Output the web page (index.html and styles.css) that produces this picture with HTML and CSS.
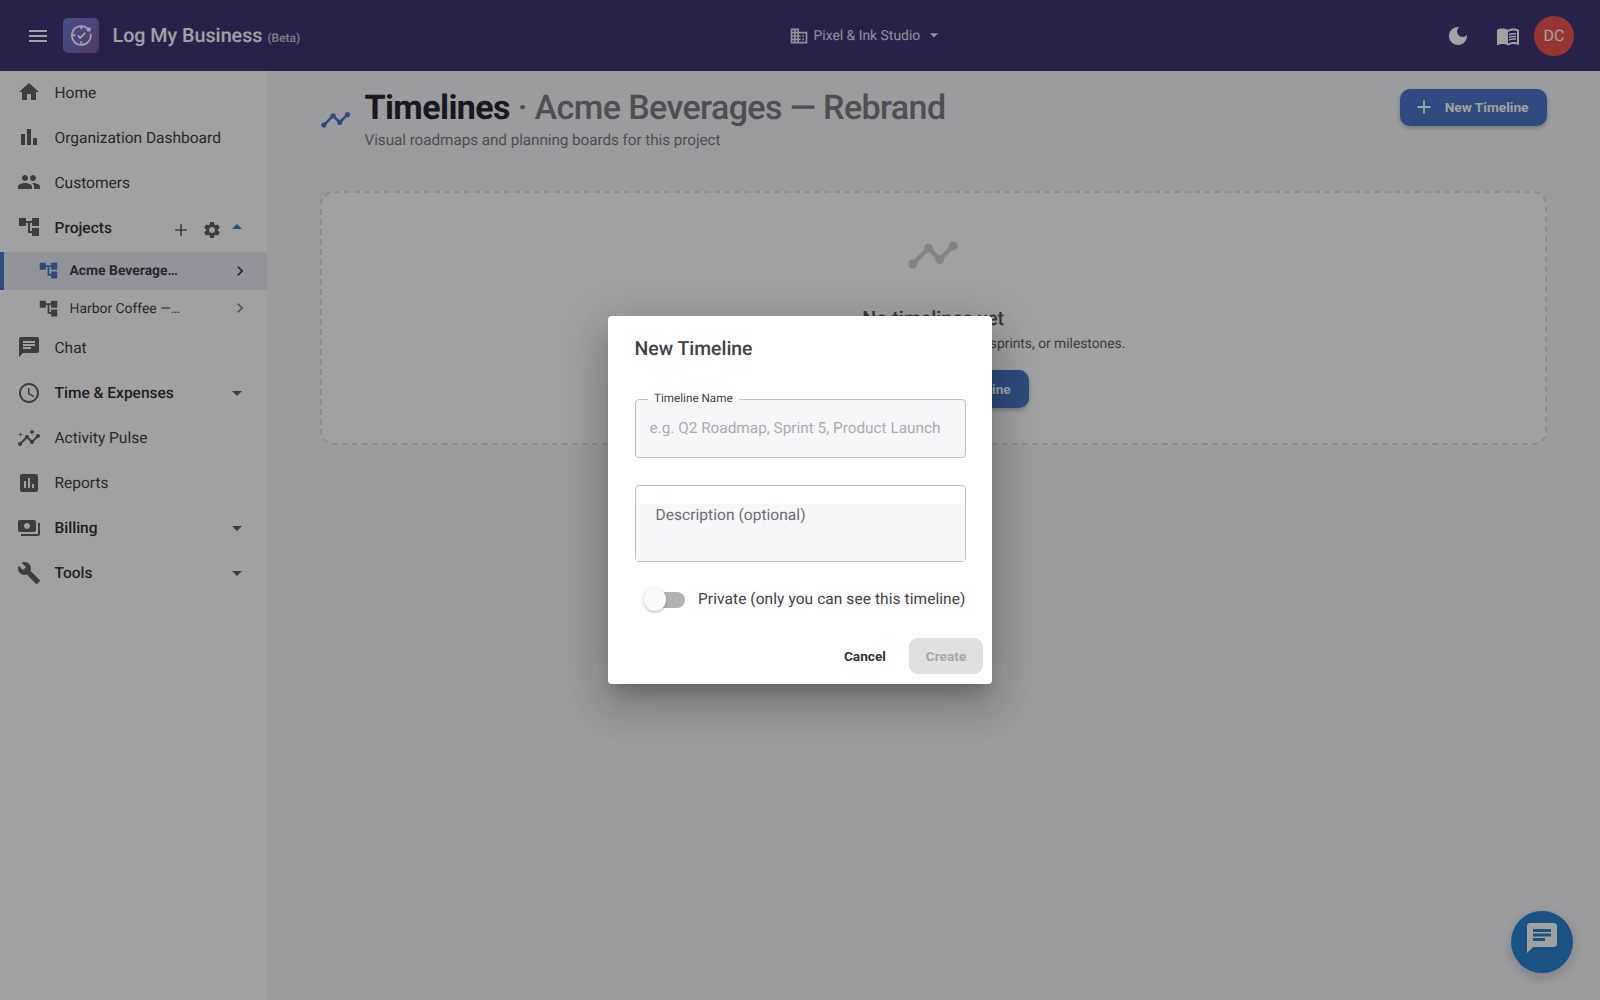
FILE: index.html
```html
<!DOCTYPE html>
<html lang="en">
<head>
<meta charset="utf-8">
<title>Timelines - Log My Business</title>
<link rel="stylesheet" href="styles.css">
</head>
<body>
<svg class="sprite" aria-hidden="true">
  <symbol id="i-menu" viewBox="0 0 24 24"><path d="M3 18h18v-2H3zm0-5h18v-2H3zm0-7v2h18V6z"/></symbol>
  <symbol id="i-home" viewBox="0 0 24 24"><path d="M10 20v-6h4v6h5v-8h3L12 3 2 12h3v8z"/></symbol>
  <symbol id="i-bars" viewBox="0 0 24 24"><path d="M4 9h4v11H4zm12 4h4v7h-4zm-6-9h4v16h-4z"/></symbol>
  <symbol id="i-people" viewBox="0 0 24 24"><path d="M16 11c1.66 0 2.99-1.34 2.99-3S17.66 5 16 5s-3 1.34-3 3 1.34 3 3 3m-8 0c1.66 0 2.99-1.34 2.99-3S9.66 5 8 5 5 6.34 5 8s1.34 3 3 3m0 2c-2.33 0-7 1.17-7 3.5V19h14v-2.500c0-2.330-4.670-3.500-7-3.500m8 0c-.29 0-.62.02-.97.05 1.160.840 1.970 1.970 1.970 3.450V19h6v-2.500c0-2.330-4.670-3.500-7-3.500"/></symbol>
  <symbol id="i-tree" viewBox="0 0 24 24"><path d="M22 11V3h-7v3H9V3H2v8h7V8h2v10h4v3h7v-8h-7v3h-2V8h2v3z"/></symbol>
  <symbol id="i-chat" viewBox="0 0 24 24"><path d="M20 2H4c-1.100 0-1.990.900-1.990 2L2 22l4-4h14c1.100 0 2-.900 2-2V4c0-1.100-.900-2-2-2M6 9h12v2H6zm8 5H6v-2h8zm4-6H6V6h12z"/></symbol>
  <symbol id="i-clock" viewBox="0 0 24 24"><path d="M11.990 2C6.470 2 2 6.480 2 12s4.470 10 9.990 10C17.520 22 22 17.520 22 12S17.520 2 11.990 2M12 20c-4.420 0-8-3.580-8-8s3.580-8 8-8 8 3.580 8 8-3.580 8-8 8m.5-13H11v6l5.250 3.150.750-1.230-4.500-2.670z"/></symbol>
  <symbol id="i-insights" viewBox="0 0 24 24"><path d="M21 8c-1.450 0-2.260 1.440-1.930 2.510l-3.550 3.560c-.3-.09-.74-.09-1.040 0l-2.550-2.550C12.270 10.450 11.460 9 10 9c-1.450 0-2.270 1.440-1.930 2.520l-4.560 4.550C2.440 15.740 1 16.550 1 18c0 1.100.900 2 2 2 1.450 0 2.260-1.440 1.930-2.510l4.550-4.560c.3.09.74.09 1.040 0l2.550 2.550C12.730 16.550 13.540 18 15 18c1.450 0 2.270-1.440 1.930-2.520l3.560-3.550c1.070.330 2.510-.480 2.510-1.930 0-1.100-.900-2-2-2"/><path d="m15 9 .94-2.070L18 6l-2.060-.930L15 3l-.920 2.070L12 6l2.080.930zM3.500 11 4 9l2-.500L4 8l-.500-2L3 8l-2 .500L3 9z"/></symbol>
  <symbol id="i-report" viewBox="0 0 24 24"><path d="M19 3H5c-1.100 0-2 .900-2 2v14c0 1.100.900 2 2 2h14c1.100 0 2-.900 2-2V5c0-1.100-.900-2-2-2M9 17H7v-7h2zm4 0h-2V7h2zm4 0h-2v-4h2z"/></symbol>
  <symbol id="i-pay" viewBox="0 0 24 24"><path d="M19 14V6c0-1.100-.900-2-2-2H3c-1.100 0-2 .900-2 2v8c0 1.100.900 2 2 2h14c1.100 0 2-.900 2-2m-9-1c-1.660 0-3-1.340-3-3s1.340-3 3-3 3 1.340 3 3-1.340 3-3 3m13-6v11c0 1.100-.900 2-2 2H4v-2h17V7z"/></symbol>
  <symbol id="i-tool" viewBox="0 0 24 24"><path d="m22.700 19-9.100-9.100c.9-2.300.4-5-1.500-6.900-2-2-5-2.400-7.400-1.300L9 6 6 9 1.600 4.700C.4 7.100.9 10.100 2.900 12.100c1.900 1.900 4.600 2.400 6.900 1.500l9.100 9.100c.4.4 1 .4 1.400 0l2.300-2.300c.5-.4.5-1.100.1-1.400"/></symbol>
  <symbol id="i-plus" viewBox="0 0 24 24"><path d="M19 13h-6v6h-2v-6H5v-2h6V5h2v6h6z"/></symbol>
  <symbol id="i-gear" viewBox="0 0 24 24"><path d="M19.140 12.940c.04-.3.06-.61.06-.94 0-.32-.02-.64-.07-.94l2.030-1.580c.18-.14.23-.41.12-.61l-1.920-3.320c-.12-.22-.37-.29-.59-.22l-2.390.96c-.5-.38-1.030-.7-1.620-.94l-.36-2.540c-.04-.24-.24-.41-.48-.41h-3.840c-.24 0-.43.17-.47.41l-.36 2.540c-.59.24-1.130.57-1.620.94l-2.390-.96c-.22-.08-.47 0-.59.22L2.740 8.870c-.12.21-.08.47.12.61l2.030 1.580c-.05.3-.09.63-.09.94s.02.64.07.94l-2.030 1.580c-.18.14-.23.41-.12.61l1.920 3.320c.12.22.37.29.59.22l2.390-.96c.5.38 1.030.7 1.620.94l.36 2.540c.05.24.24.41.48.41h3.840c.24 0 .44-.17.47-.41l.36-2.540c.59-.24 1.130-.56 1.620-.94l2.390.96c.22.08.47 0 .59-.22l1.920-3.320c.12-.22.07-.47-.12-.61zM12 15.600c-1.980 0-3.600-1.620-3.600-3.600s1.620-3.600 3.600-3.600 3.600 1.620 3.600 3.600-1.620 3.600-3.600 3.600"/></symbol>
  <symbol id="i-down" viewBox="0 0 24 24"><path d="m7 10 5 5 5-5z"/></symbol>
  <symbol id="i-up" viewBox="0 0 24 24"><path d="m7 14 5-5 5 5z"/></symbol>
  <symbol id="i-right" viewBox="0 0 24 24"><path d="M10 6 8.590 7.410 13.170 12l-4.580 4.590L10 18l6-6z"/></symbol>
  <symbol id="i-timeline" viewBox="0 0 24 24"><path d="M23 8c0 1.100-.900 2-2 2-.18 0-.35-.02-.51-.07l-3.560 3.550c.05.16.07.34.07.52 0 1.100-.900 2-2 2s-2-.900-2-2c0-.18.02-.36.07-.52l-2.550-2.550c-.16.05-.34.07-.52.07s-.36-.02-.52-.07l-4.550 4.560c.05.16.07.33.07.51 0 1.100-.900 2-2 2s-2-.900-2-2 .9-2 2-2c.18 0 .35.02.51.07l4.560-4.550C8.020 9.360 8 9.180 8 9c0-1.100.900-2 2-2s2 .900 2 2c0 .18-.02.36-.07.52l2.550 2.550c.16-.05.34-.07.52-.07s.36.02.52.07l3.550-3.560C19.020 8.350 19 8.180 19 8c0-1.100.900-2 2-2s2 .900 2 2"/></symbol>
  <symbol id="i-building" viewBox="0 0 24 24"><path d="M12 7V3H2v18h20V7zM6 19H4v-2h2zm0-4H4v-2h2zm0-4H4V9h2zm0-4H4V5h2zm4 12H8v-2h2zm0-4H8v-2h2zm0-4H8V9h2zm0-4H8V5h2zm10 12h-8v-2h2v-2h-2v-2h2v-2h-2V9h8zm-2-8h-2v2h2zm0 4h-2v2h2z"/></symbol>
  <symbol id="i-moon" viewBox="0 0 24 24"><path d="M12 3c-4.970 0-9 4.030-9 9s4.030 9 9 9 9-4.030 9-9c0-.46-.04-.92-.1-1.360-.98 1.370-2.580 2.260-4.400 2.260-2.980 0-5.400-2.420-5.400-5.400 0-1.810.890-3.420 2.260-4.400-.44-.06-.9-.1-1.360-.1"/></symbol>
  <symbol id="i-book" viewBox="0 0 24 24"><path d="M21 5c-1.110-.350-2.330-.500-3.500-.500-1.950 0-4.050.400-5.500 1.500-1.450-1.100-3.550-1.500-5.500-1.500S2.450 4.900 1 6v14.650c0 .25.25.5.5.5.1 0 .15-.05.25-.05C3.100 20.450 5.050 20 6.500 20c1.950 0 4.050.400 5.500 1.500 1.350-.850 3.800-1.500 5.500-1.500 1.650 0 3.350.300 4.750 1.050.1.05.15.05.25.05.25 0 .5-.25.5-.5V6c-.6-.45-1.250-.75-2-1m0 13.500c-1.100-.350-2.300-.500-3.500-.500-1.700 0-4.150.650-5.500 1.500V8c1.350-.850 3.800-1.500 5.500-1.500 1.200 0 2.400.150 3.500.500z"/><path d="M17.500 10.500c.88 0 1.730.09 2.500.26V9.240c-.79-.15-1.640-.24-2.500-.24-1.700 0-3.240.290-4.500.830v1.660c1.130-.640 2.700-.990 4.500-.990M13 12.490v1.660c1.130-.640 2.700-.990 4.500-.990.88 0 1.730.09 2.500.26V11.900c-.79-.15-1.640-.24-2.500-.24-1.700 0-3.240.3-4.500.83m4.500 1.840c-1.700 0-3.240.290-4.500.830v1.660c1.130-.640 2.700-.990 4.500-.990.88 0 1.730.09 2.500.26v-1.520c-.79-.16-1.640-.24-2.500-.24"/></symbol>
</svg>

<div class="app">
  <header class="topbar">
    <div class="brand">
      <svg class="icon brand-menu"><use href="#i-menu"/></svg>
      <div class="logo">
        <svg viewBox="0 0 24 24"><path d="M17.600 4.900A9.200 9.200 0 1 0 21.100 10.500M12 2.800v3.400M12 17.800v3.400M2.800 12h3.400M8.500 12.200l2.500 2.500 5-5.200"/><circle cx="19.300" cy="6.300" r="1.300"/></svg>
      </div>
      <span class="brand-name">Log My Business</span>
      <span class="brand-beta">(Beta)</span>
    </div>
    <div class="org">
      <svg class="icon s20"><use href="#i-building"/></svg>
      <span>Pixel &amp; Ink Studio</span>
      <svg class="icon s20"><use href="#i-down"/></svg>
    </div>
    <div class="top-actions">
      <svg class="icon moon"><use href="#i-moon"/></svg>
      <svg class="icon book"><use href="#i-book"/></svg>
      <div class="avatar">DC</div>
    </div>
  </header>

  <div class="body">
    <nav class="sidebar">
      <a class="nav"><svg class="icon"><use href="#i-home"/></svg><span>Home</span></a>
      <a class="nav"><svg class="icon"><use href="#i-bars"/></svg><span>Organization Dashboard</span></a>
      <a class="nav"><svg class="icon"><use href="#i-people"/></svg><span>Customers</span></a>
      <a class="nav group"><svg class="icon"><use href="#i-tree"/></svg><span>Projects</span>
        <svg class="icon s20 add"><use href="#i-plus"/></svg><svg class="icon s20 gear"><use href="#i-gear"/></svg><svg class="icon caret open"><use href="#i-up"/></svg></a>
      <a class="sub active"><svg class="icon"><use href="#i-tree"/></svg><span>Acme Beverage…</span><svg class="icon chev"><use href="#i-right"/></svg></a>
      <a class="sub"><svg class="icon"><use href="#i-tree"/></svg><span>Harbor Coffee —…</span><svg class="icon chev"><use href="#i-right"/></svg></a>
      <a class="nav"><svg class="icon"><use href="#i-chat"/></svg><span>Chat</span></a>
      <a class="nav group"><svg class="icon"><use href="#i-clock"/></svg><span>Time &amp; Expenses</span><svg class="icon caret"><use href="#i-down"/></svg></a>
      <a class="nav"><svg class="icon"><use href="#i-insights"/></svg><span>Activity Pulse</span></a>
      <a class="nav"><svg class="icon"><use href="#i-report"/></svg><span>Reports</span></a>
      <a class="nav group"><svg class="icon"><use href="#i-pay"/></svg><span>Billing</span><svg class="icon caret"><use href="#i-down"/></svg></a>
      <a class="nav group"><svg class="icon"><use href="#i-tool"/></svg><span>Tools</span><svg class="icon caret"><use href="#i-down"/></svg></a>
    </nav>

    <main class="main">
      <div class="page-head">
        <svg class="icon head-icon"><use href="#i-timeline"/></svg>
        <div class="head-text">
          <h1>Timelines <span>· Acme Beverages — Rebrand</span></h1>
          <p>Visual roadmaps and planning boards for this project</p>
        </div>
        <button class="btn-primary"><svg class="icon"><use href="#i-plus"/></svg>New Timeline</button>
      </div>
      <section class="empty">
        <svg class="icon empty-icon"><use href="#i-timeline"/></svg>
        <h2>No timelines yet</h2>
        <p>Create your timeline to visualize phases, sprints, or milestones.</p>
        <button class="btn-primary"><svg class="icon"><use href="#i-plus"/></svg>Create First Timeline</button>
      </section>
    </main>
  </div>
</div>

<button class="fab"><svg class="icon"><use href="#i-chat"/></svg></button>

<div class="backdrop">
  <div class="dialog" role="dialog">
    <h2 class="dialog-title">New Timeline</h2>
    <div class="field name-field">
      <label class="float-label">Timeline Name</label>
      <span class="placeholder">e.g. Q2 Roadmap, Sprint 5, Product Launch</span>
    </div>
    <div class="field desc-field">
      <div class="desc-input">Description (optional)</div>
    </div>
    <div class="switch-row">
      <span class="switch"><span class="thumb"></span></span>
      <span class="switch-label">Private (only you can see this timeline)</span>
    </div>
    <div class="dialog-actions">
      <button class="btn-text">Cancel</button>
      <button class="btn-disabled">Create</button>
    </div>
  </div>
</div>
</body>
</html>
```
FILE: styles.css
```css
* { box-sizing: border-box; }

body {
  margin: 0;
  height: 1000px;
  overflow: hidden;
  font-family: Roboto, sans-serif;
  font-size: 15.500px;
  color: #424242;
  text-rendering: geometricPrecision;
}

h1, h2, p { margin: 0; }

button {
  border: 0;
  font-family: inherit;
  font-size: 13.700px;
  font-weight: 700;
}

.sprite { position: absolute; width: 0; height: 0; }

.icon {
  width: 24px;
  height: 24px;
  fill: currentColor;
  flex: none;
  display: block;
}

.s20 { width: 20px; height: 20px; }

.app {
  height: 1000px;
  display: flex;
  flex-direction: column;
}

/* Top bar */
.topbar {
  height: 71px;
  flex: none;
  display: grid;
  grid-template-columns: 762.500px auto 1fr;
  align-items: center;
  padding: 0 26px;
  background: #3f3678;
  color: #fff;
}

.brand { display: flex; align-items: center; }

.logo {
  width: 35.500px;
  height: 35.500px;
  margin: 0 14px 0 13px;
  padding: 5.500px;
  border-radius: 5px;
  background: linear-gradient(135deg, #6b80dc, #8558a8);
}

.logo svg {
  display: block;
  width: 24.500px;
  height: 24.500px;
  fill: none;
  stroke: #fff;
  stroke-width: 1.800;
}

.logo circle { fill: #fff; }

.brand-name {
  font-size: 19.700px;
  font-weight: 500;
}

.brand-beta {
  margin: 5px 0 0 5px;
  font-size: 12px;
  font-weight: 500;
  opacity: .7;
}

.org {
  display: flex;
  align-items: center;
  font-size: 13.900px;
  opacity: .87;
}

.org span { margin: 0 4px 0 5px; }
.org .icon:last-child { margin-top: -1px; }

.top-actions {
  display: flex;
  align-items: center;
  justify-content: flex-end;
}

.moon { margin-right: 26px; }
.book { margin-right: 14px; }

.avatar {
  width: 40px;
  height: 40px;
  border-radius: 50%;
  background: #f05552;
  display: flex;
  align-items: center;
  justify-content: center;
  font-size: 16px;
}

/* Layout */
.body { flex: 1; display: flex; min-height: 0; }

.sidebar {
  width: 267px;
  flex: none;
  background: #fff;
  color: #424242;
}

.nav {
  height: 45.100px;
  display: flex;
  align-items: center;
  padding: 0 18px 0 17px;
}

.nav .icon { color: #616161; margin-top: -3px; }
.nav > span { margin: -2px 0 0 13.500px; flex: 1; }
.group { font-weight: 500; color: #333; }
.nav .add { margin: 2px 11px 0 0; }
.nav .gear { margin: 2px 3.500px 0 0; }
.nav .caret { margin-top: -3px; }
.nav .open { color: #4878c8; }

.sub {
  height: 37.500px;
  display: flex;
  align-items: center;
  padding: 0 17px 0 38px;
  font-size: 13.900px;
}

.sub > .icon:first-child { width: 21px; height: 21px; color: #616161; }
.sub > span { flex: 1; margin: 1px 0 0 10.500px; }
.sub .chev { width: 20px; height: 20px; opacity: .6; }
.sub + .nav { margin-top: -.700px; }

.active {
  margin-top: .700px;
  background: #e6ebf4;
  border-left: 4px solid #4878c8;
  padding-left: 34px;
  font-weight: 700;
}

.active > .icon:first-child { color: #4878c8; }
.active .chev { opacity: 1; }

.main {
  flex: 1;
  padding: 17px 53.500px 0 53px;
  background: #f5f7fa;
}

.page-head {
  height: 103px;
  display: flex;
  align-items: flex-start;
}

.head-icon {
  width: 31.500px;
  height: 31.500px;
  margin: 16px 13.500px 0 -.500px;
  color: #4878c8;
}

.head-text { flex: 1; }

h1 {
  font-size: 34px;
  line-height: 40px;
  font-weight: 700;
  letter-spacing: -.600px;
  color: #272735;
}

h1 span { font-weight: 500; color: #7b7d83; }

.head-text p {
  line-height: 22px;
  margin-top: 1px;
  font-size: 15.300px;
  letter-spacing: -.070px;
  color: #7b7d83;
}

.btn-primary {
  height: 37.500px;
  margin-top: .500px;
  display: flex;
  align-items: center;
  padding: 0 18px 0 13px;
  border-radius: 10px;
  background: #4878c8;
  color: #fff;
  box-shadow: 0 2px 4px rgba(0, 0, 0, .25);
}

.btn-primary .icon {
  width: 22px;
  height: 22px;
  margin-right: 9.500px;
}

.empty {
  height: 254px;
  display: flex;
  flex-direction: column;
  align-items: center;
  padding-top: 35px;
  border: 2px dashed #dcdfe4;
  border-radius: 14px;
  background: #fff;
}

.empty-icon { width: 54px; height: 54px; color: #d0d0d2; }

.empty h2 {
  margin-top: 23px;
  font-size: 19.600px;
  line-height: 28px;
  font-weight: 500;
  color: #565660;
}

.empty p {
  font-size: 13.800px;
  line-height: 22px;
  color: #5e5e6a;
}

.empty .btn-primary { margin-top: 15px; }

.fab {
  position: absolute;
  right: 27px;
  bottom: 27px;
  width: 62.500px;
  height: 62.500px;
  padding: 0 0 7px;
  border-radius: 50%;
  background: #2a82d0;
  color: #fff;
  display: flex;
  align-items: center;
  justify-content: center;
  box-shadow: 0 4px 12px rgba(0, 0, 0, .2);
}

.fab .icon { width: 36px; height: 36px; }

/* Dialog */
.backdrop {
  position: absolute;
  inset: 0;
  display: flex;
  align-items: center;
  justify-content: center;
  background: rgba(0, 0, 0, .37);
}

.dialog {
  width: 384px;
  height: 368px;
  margin-bottom: 1px;
  padding: 17px 26.500px 0;
  border-radius: 4px;
  background: #fff;
  box-shadow: 0 11px 15px -7px rgba(0, 0, 0, .2), 0 24px 38px 3px rgba(0, 0, 0, .14), 0 9px 46px 8px rgba(0, 0, 0, .12);
}

.dialog-title {
  height: 66px;
  line-height: 31px;
  font-size: 19.400px;
  font-weight: 500;
}

.field {
  border: 1px solid #bfc3c5;
  border-radius: 4px;
}

.name-field {
  position: relative;
  height: 59px;
  padding: 0 14px 1px;
  display: flex;
  align-items: center;
  background: #f5f8f9;
}

.float-label {
  position: absolute;
  left: 12.500px;
  top: -9px;
  padding: 0 6px;
  height: 15px;
  line-height: 15px;
  font-size: 11.700px;
  background: linear-gradient(#fff 9px, #f5f8f9 9px);
}

.placeholder { font-size: 15.350px; color: #a9adaf; }

.desc-field { height: 77px; margin-top: 27px; padding-top: 18.500px; }

.desc-input {
  height: 56.500px;
  padding-left: 20px;
  line-height: 22px;
  letter-spacing: .050px;
  background: #f5f8f9;
  color: #6b6e70;
}

.switch-row {
  display: flex;
  align-items: center;
  justify-content: flex-end;
  gap: 13px;
  margin-top: 25.500px;
  height: 26px;
  white-space: nowrap;
  letter-spacing: .070px;
}

.switch-label { margin-top: -3px; }

.switch {
  width: 37px;
  height: 15.500px;
  border-radius: 8px;
  background: #b4b4b4;
}

.thumb {
  display: block;
  width: 22.500px;
  height: 22.500px;
  margin: -4px 0 0 -4.500px;
  border-radius: 50%;
  background: #fcfcfc;
  box-shadow: 0 1px 3px rgba(0, 0, 0, .3);
}

.dialog-actions {
  display: flex;
  justify-content: flex-end;
  align-items: center;
  gap: 9px;
  margin: 25px -17.500px 0 0;
}

.btn-text { padding: 0 14px; background: none; color: #333; }

.btn-disabled {
  width: 74px;
  height: 36px;
  border-radius: 9px;
  background: #e0e0e0;
  color: #a6a6a6;
}
```
